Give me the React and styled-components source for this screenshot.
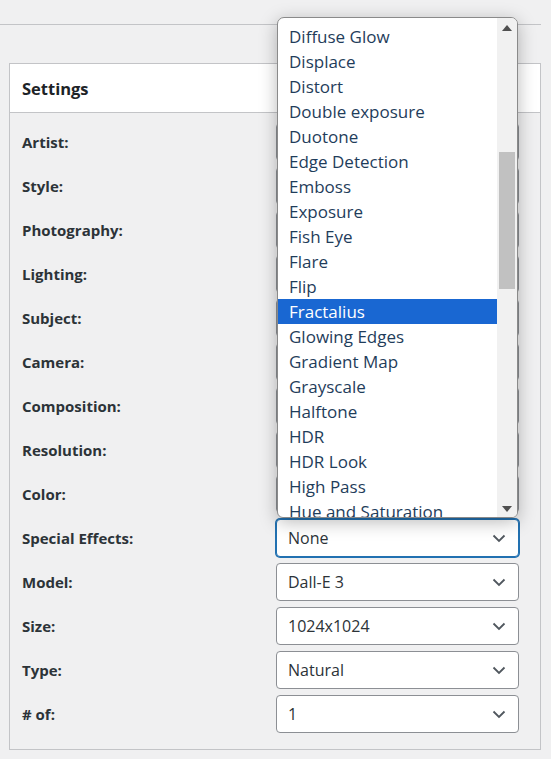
import React from 'react'
import styled, { createGlobalStyle } from 'styled-components'

const GlobalStyle = createGlobalStyle`
  html, body {
    margin: 0;
    padding: 0;
    background: #f0f0f1;
    font-family: "Open Sans", "Noto Sans", Arial, sans-serif;
    color: #2c3338;
  }
  * { box-sizing: border-box; }
`

// rows hidden behind the open menu keep an empty value
const fields = [
  { label: 'Artist:', value: '' },
  { label: 'Style:', value: '' },
  { label: 'Photography:', value: '' },
  { label: 'Lighting:', value: '' },
  { label: 'Subject:', value: '' },
  { label: 'Camera:', value: '' },
  { label: 'Composition:', value: '' },
  { label: 'Resolution:', value: '' },
  { label: 'Color:', value: '' },
  { label: 'Special Effects:', value: 'None', open: true },
  { label: 'Model:', value: 'Dall-E 3' },
  { label: 'Size:', value: '1024x1024' },
  { label: 'Type:', value: 'Natural' },
  { label: '# of:', value: '1' },
]

const effects = [
  'Diffuse Glow', 'Displace', 'Distort', 'Double exposure', 'Duotone',
  'Edge Detection', 'Emboss', 'Exposure', 'Fish Eye', 'Flare', 'Flip',
  'Fractalius', 'Glowing Edges', 'Gradient Map', 'Grayscale', 'Halftone',
  'HDR', 'HDR Look', 'High Pass', 'Hue and Saturation',
]

function Chevron() {
  return (
    <svg width="14" height="9" viewBox="0 0 14 9">
      <path d="M1.5 1.5 L7 7 L12.5 1.5" fill="none" stroke="#50575e" strokeWidth="1.8" />
    </svg>
  )
}

function Arrow({ down }) {
  return (
    <svg width="10" height="6" viewBox="0 0 10 6">
      <path d={down ? 'M0 0 H10 L5 6 Z' : 'M0 6 H10 L5 0 Z'} fill="#505050" />
    </svg>
  )
}

function EffectsMenu() {
  return (
    <Menu>
      <MenuList>
        {effects.map((name) => (
          <MenuItem key={name} $selected={name === 'Fractalius'}>{name}</MenuItem>
        ))}
      </MenuList>
      <Scrollbar>
        <ArrowBtn><Arrow /></ArrowBtn>
        <Track>
          <Thumb />
        </Track>
        <ArrowBtn><Arrow down /></ArrowBtn>
      </Scrollbar>
    </Menu>
  )
}

export default function App() {
  return (
    <>
      <GlobalStyle />
      <Page>
        <TopRule />
        <Card>
          <CardHeader>Settings</CardHeader>
          <CardBody>
            {fields.map((f) => (
              <Row key={f.label}>
                <Label>{f.label}</Label>
                <SelectWrap>
                  <SelectBox $focused={f.open}>
                    <span>{f.value}</span>
                    <Chevron />
                  </SelectBox>
                  {f.open && <EffectsMenu />}
                </SelectWrap>
              </Row>
            ))}
          </CardBody>
        </Card>
      </Page>
    </>
  )
}

const Page = styled.div`
  width: 551px;
  height: 759px;
  overflow: hidden;
  padding-top: 24px;
`

const TopRule = styled.div`
  width: 541px;
  border-top: 1px solid #c3c4c7;
`

const Card = styled.section`
  margin: 38px 0 0 9px;
  width: 532px;
  border: 1px solid #c3c4c7;
  background: #f0f0f1;
`

const CardHeader = styled.h2`
  margin: 0;
  height: 49px;
  display: flex;
  align-items: center;
  padding: 0 12px;
  background: #fff;
  border-bottom: 1px solid #c3c4c7;
  font-size: 16.5px;
  font-weight: 700;
  color: #1d2327;
`

const CardBody = styled.div`
  display: flex;
  flex-direction: column;
  gap: 6px;
  padding: 10px 20px 16px 12px;
`

const Row = styled.div`
  display: grid;
  grid-template-columns: 254px 243px;
  align-items: center;
  height: 38px;
`

const Label = styled.label`
  font-size: 15px;
  font-weight: 700;
  color: #2c3338;
`

const SelectWrap = styled.div`
  position: relative;
  height: 38px;
`

const SelectBox = styled.div`
  height: 38px;
  display: flex;
  align-items: center;
  justify-content: space-between;
  padding: 0 12px 0 11px;
  background: #fff;
  border: 1px solid ${(p) => (p.$focused ? '#2271b1' : '#8c8f94')};
  box-shadow: ${(p) => (p.$focused ? '0 0 0 1px #2271b1' : 'none')};
  border-radius: 4px;
  font-size: 16px;
  color: #2c3338;
`

const Menu = styled.div`
  position: absolute;
  left: 1px;
  bottom: calc(100% + 1px);
  width: 241px;
  height: 501px;
  display: flex;
  background: #fff;
  border: 1px solid #8a8a8a;
  border-radius: 7px 7px 6px 6px;
  box-shadow: 0 4px 18px rgba(0, 0, 0, 0.28);
  overflow: hidden;
  z-index: 5;
`

const MenuList = styled.ul`
  flex: 1;
  margin: 0;
  padding: 6px 0 0;
  list-style: none;
`

const MenuItem = styled.li`
  height: 25px;
  line-height: 25px;
  padding-left: 11px;
  font-size: 17px;
  white-space: nowrap;
  color: ${(p) => (p.$selected ? '#fff' : '#1f3d5b')};
  background: ${(p) => (p.$selected ? '#1967d2' : 'transparent')};
`

const Scrollbar = styled.div`
  width: 20px;
  display: flex;
  flex-direction: column;
  background: #f1f1f1;
`

const ArrowBtn = styled.div`
  height: 18px;
  display: flex;
  align-items: center;
  justify-content: center;
  padding-top: 2px;
`

const Track = styled.div`
  flex: 1;
  padding: 116px 2px 0;
`

const Thumb = styled.div`
  height: 137px;
  background: #c1c1c1;
`
